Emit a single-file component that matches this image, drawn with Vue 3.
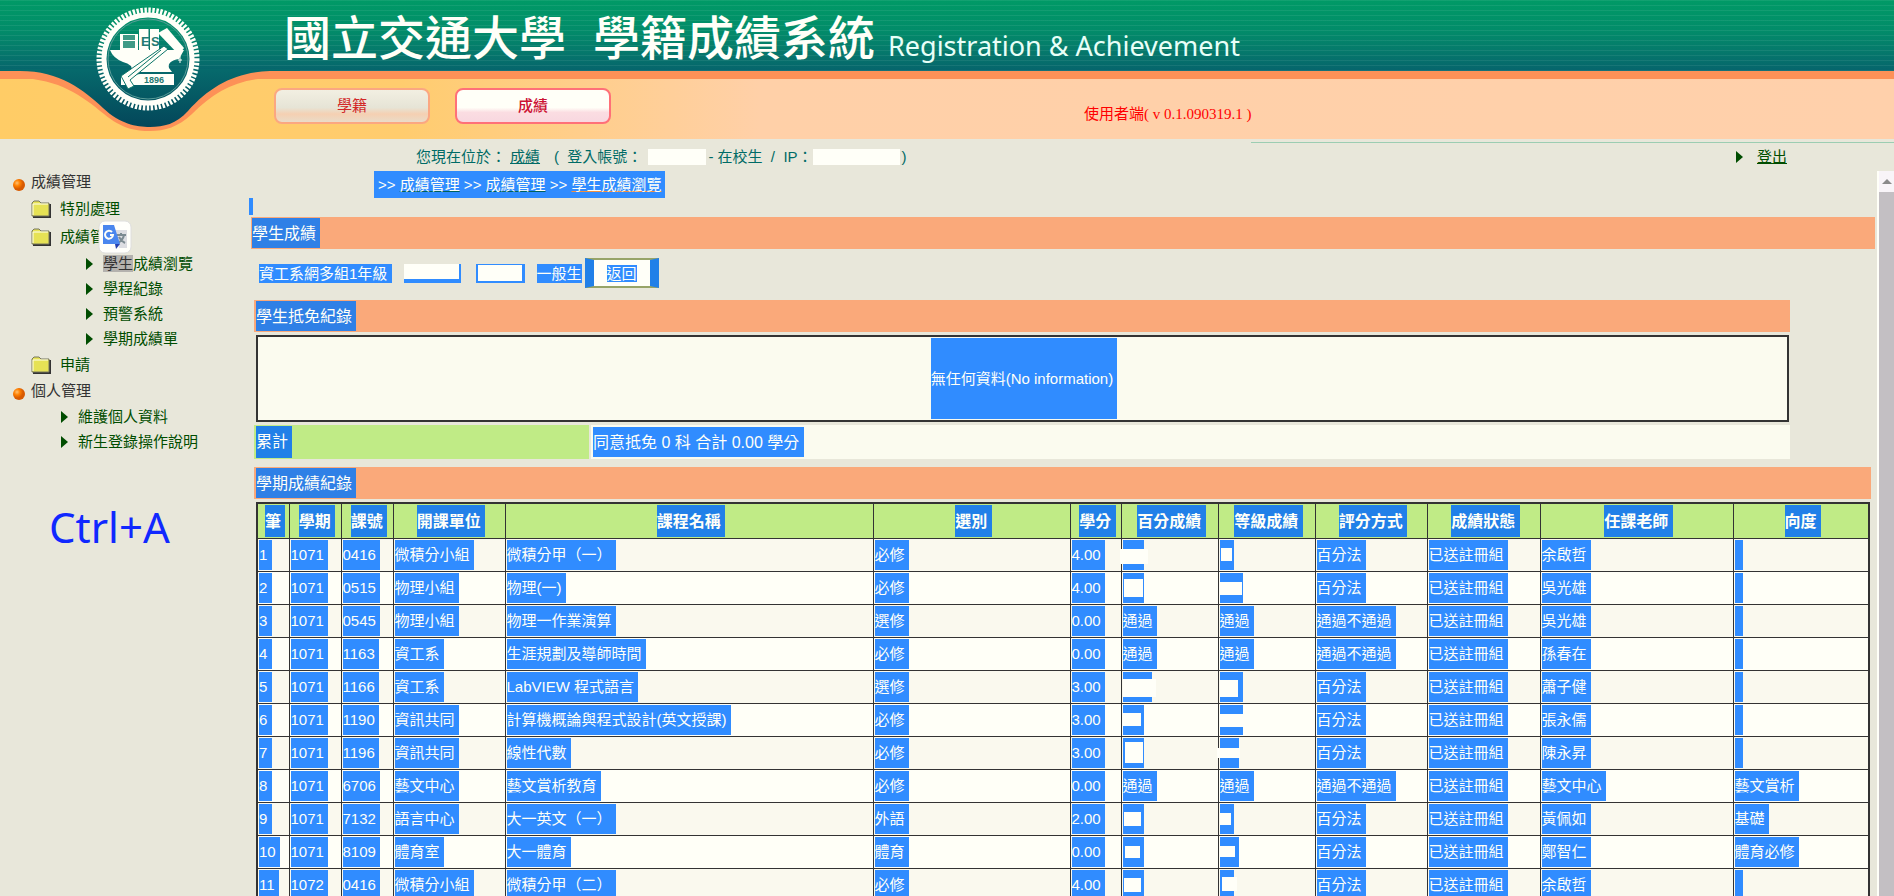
<script setup>
const columns = ['筆', '學期', '課號', '開課單位', '課程名稱', '選別', '學分', '百分成績', '等級成績', '評分方式', '成績狀態', '任課老師', '向度']

// hidden score: w = selection width, box = [left, top, width, height] of the cover
const cover = (w, ...box) => ({ w, box })

const rows = [
  ['1', '1071', '0416', '微積分小組', '微積分甲（一）', '必修', '4.00', cover(21, -3, 9, 28, 15), cover(14, 1, 8, 11, 13), '百分法', '余啟哲', ''],
  ['2', '1071', '0515', '物理小組', '物理(一)', '必修', '4.00', cover(21, 1, 6, 19, 18), cover(23, 0, 9, 22, 13), '百分法', '吳光雄', ''],
  ['3', '1071', '0545', '物理小組', '物理一作業演算', '選修', '0.00', '通過', '通過', '通過不通過', '吳光雄', ''],
  ['4', '1071', '1163', '資工系', '生涯規劃及導師時間', '必修', '0.00', '通過', '通過', '通過不通過', '孫春在', ''],
  ['5', '1071', '1166', '資工系', 'LabVIEW 程式語言', '選修', '3.00', cover(29, 0, 7, 33, 18), cover(23, 0, 8, 18, 17), '百分法', '蕭子健', ''],
  ['6', '1071', '1190', '資訊共同', '計算機概論與程式設計(英文授課)', '必修', '3.00', cover(21, 0, 8, 18, 13), cover(23, 0, 9, 23, 13), '百分法', '張永儒', ''],
  ['7', '1071', '1196', '資訊共同', '線性代數', '必修', '3.00', cover(21, 2, 4, 18, 21), cover(19, -3, 10, 23, 10), '百分法', '陳永昇', ''],
  ['8', '1071', '6706', '藝文中心', '藝文賞析教育', '必修', '0.00', '通過', '通過', '通過不通過', '藝文中心', '藝文賞析'],
  ['9', '1071', '7132', '語言中心', '大一英文（一）', '外語', '2.00', cover(21, 1, 8, 17, 14), cover(14, 0, 9, 11, 12), '百分法', '黃佩如', '基礎'],
  ['10', '1071', '8109', '體育室', '大一體育', '體育', '0.00', cover(21, 2, 9, 15, 12), cover(19, 0, 9, 15, 11), '百分法', '鄭智仁', '體育必修'],
  ['11', '1072', '0416', '微積分小組', '微積分甲（二）', '必修', '4.00', cover(21, 1, 8, 17, 14), cover(14, 2, 7, 15, 14), '百分法', '余啟哲', '']
].map((r) => [...r.slice(0, 10), '已送註冊組', ...r.slice(10)])

const px = (n) => n + 'px'
const boxStyle = ([left, top, width, height]) => ({ left: px(left), top: px(top), width: px(width), height: px(height) })

const scoreItems = ['學生成績瀏覽', '學程紀錄', '預警系統', '學期成績單']
const personalItems = ['維護個人資料', '新生登錄操作說明']
</script>

<template>
  <div class="page">
    <header class="header">
      <div class="banner">
        <h1>國立交通大學<span>學籍成績系統</span></h1>
        <p>Registration &amp; Achievement</p>
      </div>
      <div class="tabs">
        <button type="button" class="tab">學籍</button>
        <button type="button" class="tab active">成績</button>
        <span class="version">使用者端( v 0.1.090319.1 )</span>
      </div>
      <svg class="crest" width="300" height="139" viewBox="0 0 300 139" aria-hidden="true">
        <defs>
          <linearGradient id="dip" x1="0" y1="0" x2="0" y2="1">
            <stop offset="0" stop-color="#066a6c" />
            <stop offset="1" stop-color="#04465a" />
          </linearGradient>
        </defs>
        <path d="M0 78H18C60 79 82 96 104 114C122 129 136 131 150 131C165 131 178 127 192 114C214 92 236 79 270 78H300V70H0Z" fill="#fd9157" />
        <path d="M0 69V71H20C60 71 84 90 103 108C120 124 136 127 150 127C164 127 176 124 188 111C210 86 236 72 270 71H300V69Z" fill="url(#dip)" />
        <g fill="none" stroke="#fffff8">
          <circle cx="148" cy="59" r="48" stroke-width="7" stroke-dasharray="2.4 1.5" />
          <circle cx="148" cy="59" r="44" stroke-width="5" />
          <circle cx="148" cy="59" r="40" stroke="#5a9c98" stroke-width="1" />
        </g>
        <g fill="#fffff8">
          <path d="M120 34h18v16h-18zM139 29h10v21h-10zM150 29h9v21h-9z" />
          <path d="M110 50H184L179 59Q167 61 169 68L172 72H132Q133 64 123 62Q113 58 110 50Z" />
          <path d="M158 33L167 28L184 48L179 55Z" />
          <path d="M140 74h34v11h-53v-8z" />
        </g>
        <path d="M123 35h12v5h-12zM123 41h12v7h-12z" fill="#3f9a86" />
        <g stroke="#0a7468" fill="none">
          <path d="M149 29v20" />
          <path d="M180 56v7M178 60h4" stroke="#fffff8" />
        </g>
        <path d="M164 46L168 49L130 80L134 86L128 89L121 76Z" fill="#fffff8" stroke="#0a7468" />
        <path d="M161 50L128 77" stroke="#0a7468" />
        <g class="crest-text">
          <text x="141" y="46">E</text>
          <text x="151" y="46">S</text>
          <text x="144" y="83" class="year">1896</text>
        </g>
      </svg>
    </header>

    <div class="body">
      <nav class="side" aria-label="功能選單">
        <div class="group"><i class="ball"></i>成績管理</div>
        <a class="folder" href="#">
          <svg width="20" height="18" viewBox="0 0 20 18" aria-hidden="true"><path d="M2 17H19V4" fill="none" stroke="#333" stroke-width="2" /><path d="M1 16V3L3 1H8L10 3H18V16Z" fill="#e6e255" stroke="#777760" /><path d="M2 15V4H17" fill="none" stroke="#fffff0" /></svg>
          特別處理
        </a>
        <a class="folder" href="#">
          <svg width="20" height="18" viewBox="0 0 20 18" aria-hidden="true"><path d="M2 17H19V4" fill="none" stroke="#333" stroke-width="2" /><path d="M1 16V3L3 1H8L10 3H18V16Z" fill="#e6e255" stroke="#777760" /><path d="M2 15V4H17" fill="none" stroke="#fffff0" /></svg>
          成績管理
          <svg class="translate" width="34" height="34" viewBox="0 0 34 34" aria-hidden="true">
            <rect x="1" y="1" width="32" height="32" rx="6" fill="#fffffb" stroke="#dedede" />
            <path d="M16 10H29V28H21Z" fill="#dcdde2" />
            <path d="M19 15h9M23 13v2M26 15q-1 5-6 8M21 17q2 4 6 6" fill="none" stroke="#7c8b92" stroke-width="2" />
            <path d="M5 5H16L22 24H5Z" fill="#4a86ee" />
            <path d="M17 24H22L18 29Z" fill="#2440b0" />
            <path d="M14 12A4 4 0 1 0 15 15H12" fill="none" stroke="#fffff8" stroke-width="2" />
          </svg>
        </a>
        <a v-for="(t, i) in scoreItems" :key="t" class="leaf deep" href="#">
          <i class="arrow"></i><span v-if="i === 0"><mark>學生</mark>成績瀏覽</span><span v-else>{{ t }}</span>
        </a>
        <a class="folder last" href="#">
          <svg width="20" height="18" viewBox="0 0 20 18" aria-hidden="true"><path d="M2 17H19V4" fill="none" stroke="#333" stroke-width="2" /><path d="M1 16V3L3 1H8L10 3H18V16Z" fill="#e6e255" stroke="#777760" /><path d="M2 15V4H17" fill="none" stroke="#fffff0" /></svg>
          申請
        </a>
        <div class="group"><i class="ball"></i>個人管理</div>
        <a v-for="t in personalItems" :key="t" class="leaf" href="#"><i class="arrow"></i>{{ t }}</a>
        <p class="hint">Ctrl+A</p>
      </nav>

      <div class="right">
        <div class="status">
          <span>您現在位於：</span>
          <a class="here" href="#">成績</a>
          <span>(&nbsp; 登入帳號：</span>
          <span class="blank account"></span>
          <span>- 在校生 &nbsp;/&nbsp; IP：</span>
          <span class="blank ip"></span>
          <span>)</span>
          <a class="logout" href="#"><i class="arrow"></i><span>登出</span></a>
        </div>

        <div class="frame">
          <main class="content">
            <div class="crumbs">&gt;&gt; <a href="#">成績管理</a> &gt;&gt; <a href="#">成績管理</a> &gt;&gt; <a class="current" href="#">學生成績瀏覽</a></div>
            <div class="caret"></div>
            <h2 class="bar first"><span>學生成績&nbsp;</span></h2>
            <div class="student">
              <span class="sel">資工系網多組1年級&nbsp;</span>
              <span class="sel id"></span>
              <span class="sel name"></span>
              <span class="sel">一般生</span>
              <button type="button" class="back"><span>返回</span></button>
            </div>

            <section class="credit">
              <h2 class="bar"><span>學生抵免紀錄&nbsp;</span></h2>
              <div class="empty"><span>無任何資料(No information)&nbsp;</span></div>
              <div class="total">
                <div class="total-label"><span>累計&nbsp;</span></div>
                <div class="total-value"><span>同意抵免 0 科 合計 0.00 學分&nbsp;</span></div>
              </div>
            </section>

            <section class="records">
              <h2 class="bar"><span>學期成績紀錄&nbsp;</span></h2>
              <table>
                <thead>
                  <tr><th v-for="c in columns" :key="c" scope="col"><span>{{ c }}&nbsp;</span></th></tr>
                </thead>
                <tbody>
                  <tr v-for="r in rows" :key="r[0]">
                    <td v-for="(c, i) in r" :key="i">
                      <span v-if="c.box" class="cell" :style="{ width: px(c.w) }"><i :style="boxStyle(c.box)"></i></span>
                      <span v-else-if="c" class="cell">{{ c }}&nbsp;</span>
                      <span v-else class="cell void"></span>
                    </td>
                  </tr>
                </tbody>
              </table>
            </section>
          </main>
          <div class="scrollbar" aria-hidden="true"><div class="up"></div></div>
        </div>
      </div>
    </div>
  </div>
</template>

<style>
body { margin: 0; background: #e8e7da; }
</style>

<style scoped>
* { box-sizing: border-box; }
.page {
  display: flex; flex-direction: column; height: 100vh; overflow: hidden;
  background: #e8e7da; color: #333;
  font: 15px/20px "Liberation Sans", "Noto Sans CJK TC", sans-serif;
}
h1, h2, p { margin: 0; font-weight: normal; }
a { color: inherit; text-decoration: none; }

.header { position: relative; flex: none; }
.banner {
  display: flex; align-items: center; height: 71px; padding-left: 284px;
  white-space: nowrap; color: #fffff8;
  background:
    repeating-linear-gradient(rgba(255,255,255,.07) 0 1px, transparent 1px 5px),
    linear-gradient(#009a66 0, #028c69 30px, #057a6b 50px, #06646c 71px);
}
.banner h1 { font: 500 47px/60px "Noto Sans CJK TC", sans-serif; margin-bottom: 2px; }
.banner h1 span { margin-left: 27px; }
.banner p { font: 27px/40px "Noto Sans", sans-serif; margin: 20px 0 0 13px; color: #e8fff8; }
.tabs {
  display: flex; height: 68px; padding: 9px 0 0 274px; border-top: 8px solid #fd9157;
  background: linear-gradient(90deg, #ffcc66 0, #ffcc6e 400px, #ffd0a8 760px, #ffd0ab 100%);
}
.tab {
  width: 156px; height: 36px; padding: 0; margin-right: 25px; color: #d22828;
  font: 15px/20px "Liberation Sans", "Noto Sans CJK TC", sans-serif;
  border: 2px solid #fba781; border-radius: 8px;
  background: linear-gradient(#f2efe2, #e6e4d6 55%, #f5d0b2 75%, #eadcc8);
}
.tab.active { color: #cc1234; font-weight: 500; border-color: #ff7078; background: linear-gradient(#fffff8 55%, #fbdde2 70%, #f8d8e0); }
.version { margin: 16px 0 0 448px; font: 15px/20px "Liberation Serif", "Noto Sans CJK TC", serif; color: #f00; }
.crest { position: absolute; left: 0; top: 0; }
.crest-text { font: bold 13px "Liberation Sans", sans-serif; fill: #237a72; }
.crest-text .year { font-size: 9px; }

.body { flex: 1; display: flex; min-height: 0; }
.side { width: 249px; flex: none; padding-top: 30px; color: #004d00; }
.group { display: flex; align-items: center; height: 26px; padding-left: 13px; color: #333; }
.ball {
  width: 12px; height: 12px; margin: 5px 6px 0 0; border-radius: 50%;
  background: radial-gradient(circle at 4px 4px, #ffc070 0, #ff8000 3px, #d85a00 6px);
}
.folder { position: relative; display: flex; align-items: center; gap: 9px; height: 28px; padding-left: 31px; }
.folder.last { margin-top: 1px; height: 26px; }
.translate { position: absolute; left: 98px; top: -3px; }
.leaf { display: flex; align-items: center; height: 25px; padding-left: 61px; }
.leaf.deep { padding-left: 86px; }
.arrow { width: 0; height: 0; border: 6px solid transparent; border-left: 7px solid #004d00; border-right: 0; }
.leaf .arrow { margin-right: 10px; }
.side mark { background: #b4b2ae; color: #333; }
.hint { margin: 46px 0 0 49px; font: 42px/54px "Noto Sans", sans-serif; color: #1028ff; }

.right { flex: 1; display: flex; flex-direction: column; min-width: 0; }
.status {
  display: flex; align-items: center; flex: none; height: 32px; padding: 4px 0 0 167px;
  white-space: nowrap; color: #006b66;
  background: linear-gradient(#9ccdb2, #9ccdb2) 1002px 3px / 100% 1px no-repeat;
}
.here { text-decoration: underline; margin: 0 14px 0 4px; }
.blank { height: 16px; background: #fffff8; }
.account { width: 58px; margin: 0 2px 0 6px; }
.ip { width: 87px; margin: 0 2px 0 0; }
.logout { display: flex; align-items: center; gap: 14px; margin: 0 107px 0 auto; color: #004d00; }
.logout span { text-decoration: underline; }

.frame { flex: 1; display: flex; min-height: 0; }
.content { flex: 1; min-width: 0; overflow: hidden; }
.crumbs { width: fit-content; height: 27px; margin-left: 125px; padding: 0 4px; line-height: 27px; background: #308cff; color: #fffff8; white-space: nowrap; }
.crumbs a { text-decoration: underline; text-decoration-color: #00605c; }
.crumbs a.current { text-decoration-color: #f09040; }
.caret { width: 4px; height: 17px; background: #308cff; }
.bar { height: 32px; padding: 1px 2px; background: #faa97a; font-size: 16px; line-height: 32px; }
.bar span { display: block; width: fit-content; height: 30px; background: #2f80e6; color: #fffff8; }
.bar.first { margin: 2px 2px 0; padding-left: 1px; }
.student { display: flex; align-items: center; height: 51px; padding: 0 0 3px 10px; white-space: nowrap; }
.sel { height: 19px; line-height: 19px; background: #308cff; color: #fffff8; }
.sel + .sel { margin-left: 12px; }
.sel.id { width: 57px; border: solid #308cff; border-width: 0 2px 4px 0; background: #fffff8; }
.sel.name { width: 49px; margin-left: 15px; border: solid #308cff; border-width: 1px 3px 2px 2px; background: #fffff8; }
.back {
  height: 30px; width: 74px; padding: 0; margin-left: 3px; background: #fffff8;
  border: solid; border-width: 2px 9px; border-color: #97a468 #2180e8;
  font: 15px/19px "Liberation Sans", "Noto Sans CJK TC", sans-serif; color: #fffff8;
}
.back span { background: #308cff; }
.credit { margin: 0 87px 0 5px; }
.empty {
  display: flex; justify-content: center; height: 87px; margin: 3px 1px 3px 2px; padding: 1px 0 1px 3px;
  border: 2px solid #333; background: #fbfbef;
}
.empty span { background: #308cff; color: #fffff8; line-height: 81px; }
.total { display: flex; gap: 2px; font-size: 16px; line-height: 32px; color: #fffff8; }
.total-label { width: 335px; height: 34px; padding: 1px 2px; background: #c0eb86; }
.total-label span { display: block; width: fit-content; background: #2180e8; }
.total-value { flex: 1; height: 34px; padding: 2px; background: #fbfbef; }
.total-value span { display: block; width: fit-content; line-height: 32px; height: 30px; background: #308cff; }

.records { margin: 8px 6px 0 5px; }
table { width: calc(100% - 3px); margin: 3px 1px 0 2px; table-layout: fixed; border-collapse: collapse; border: 2px solid #333; }
th, td { padding: 1px; border: 1px solid #333; white-space: nowrap; text-align: left; }
th { height: 35px; padding-left: 5px; background: #c0eb86; text-align: center; font-size: 16px; }
th span { display: inline-block; vertical-align: top; height: 32px; line-height: 33px; background: #2180e8; color: #fffff8; }
td { height: 33px; background: #fffff7; }
tbody tr:nth-child(odd) td { background: #faf9ee; }
.cell { display: block; position: relative; width: fit-content; height: 30px; line-height: 30px; background: #308cff; color: #fffff8; }
.cell i { position: absolute; background: #fffff8; }
.void { width: 8px; }
th:nth-child(1) { width: 32px; }
th:nth-child(2), th:nth-child(3) { width: 52px; }
th:nth-child(4) { width: 112px; }
th:nth-child(5) { width: 368px; }
th:nth-child(6) { width: 197px; }
th:nth-child(7) { width: 51px; }
th:nth-child(8), th:nth-child(9) { width: 97px; }
th:nth-child(10) { width: 112px; }
th:nth-child(11) { width: 113px; }
th:nth-child(12) { width: 193px; }
th:nth-child(13) { width: 136px; }

.scrollbar { width: 17px; flex: none; background: #c3bfc3; border-left: 2px solid #fffff8; }
.up { height: 21px; background: #f8f4f8; display: grid; place-items: center; }
.up::after { content: ""; border: 5px solid transparent; border-bottom-color: #8a8a8a; border-top: 0; }
</style>
